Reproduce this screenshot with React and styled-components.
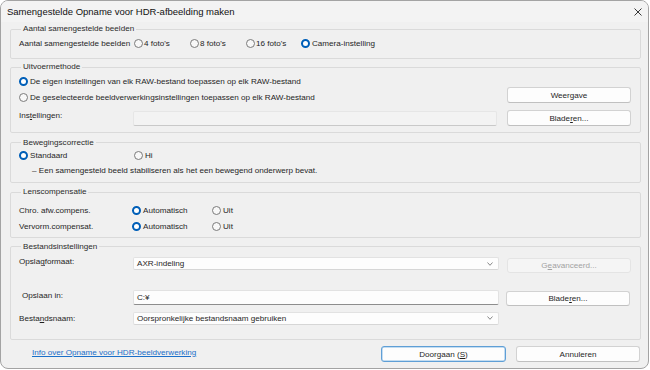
import React from 'react';
import styled, { createGlobalStyle } from 'styled-components';

const GlobalStyle = createGlobalStyle`
  html, body {
    margin: 0;
    padding: 0;
    background: #ffffff;
  }
  body {
    font-family: "Liberation Sans", Arial, sans-serif;
    font-size: 8.1px;
    color: #1f1f1f;
  }
  * { box-sizing: border-box; }
`;

// window frame
const Window = styled.div`
  width: 649px;
  height: 369px;
  border: 1px solid #a3a3a3;
  border-radius: 8px;
  background: #f0f0f0;
  display: flex;
  flex-direction: column;
  overflow: hidden;
`;

const TitleBar = styled.div`
  height: 21px;
  flex: none;
  display: flex;
  align-items: center;
  justify-content: space-between;
  padding: 0 5px 0 6px;
  background: #f3f3f3;
  font-size: 9.5px;
  color: #111;
`;

const CloseIcon = styled.svg`
  width: 10px;
  height: 10px;
  display: block;
`;

const Body = styled.div`
  flex: 1;
  display: flex;
  flex-direction: column;
  padding: 0 7px 0 9px;
`;

// group boxes
const Group = styled.fieldset`
  margin: ${p => p.$top}px 0 0 0;
  padding: ${p => p.$pad};
  border: 1px solid #dadada;
  border-radius: 2px;
  min-width: 0;
`;

const Legend = styled.legend`
  padding: 0 2px;
  margin-left: 2px;
  line-height: 12px;
  height: 12px;
  color: #2b2b2b;
`;

const Row = styled.div`
  display: flex;
  align-items: center;
  height: ${p => p.$h || 14}px;
`;

const Label = styled.span`
  flex: none;
  width: ${p => (p.$w ? `${p.$w}px` : 'auto')};
  white-space: nowrap;
`;

const RadioItem = styled.label`
  display: flex;
  align-items: center;
  gap: ${p => p.$gap ?? 2}px;
  width: ${p => (p.$w ? `${p.$w}px` : 'auto')};
  flex: none;
  white-space: nowrap;
`;

const Dot = styled.span`
  width: 9px;
  height: 9px;
  flex: none;
  border-radius: 50%;
  border: ${p => (p.$on ? '2.8px solid #005fb8' : '1px solid #7b7b7b')};
  background: ${p => (p.$on ? '#ffffff' : '#f8f8f8')};
`;

const MethodGrid = styled.div`
  display: grid;
  grid-template-columns: 104px 364px 124px;
  grid-template-rows: 14px 18px 20px;
  column-gap: 10px;
`;

const FileGrid = styled.div`
  display: grid;
  grid-template-columns: 106px 366px 124px;
  grid-template-rows: 33px 21.5px 13px;
  column-gap: 8px;
`;

const Cell = styled.div`
  grid-column: ${p => p.$col || 'auto'};
  align-self: ${p => p.$align || 'center'};
  margin-top: ${p => p.$mt || 0}px;
  margin-left: ${p => p.$ml || 0}px;
  display: flex;
  align-items: center;
  white-space: nowrap;
`;

const Button = styled.div`
  height: ${p => p.$h || 16}px;
  width: ${p => p.$w || 124}px;
  display: flex;
  align-items: center;
  justify-content: center;
  border: 1px solid ${p => (p.$primary ? '#5f9fd6' : p.$disabled ? '#e4e4e4' : '#d2d2d2')};
  border-bottom-color: ${p => (p.$primary ? '#5f9fd6' : p.$disabled ? '#e4e4e4' : '#c0c0c0')};
  border-radius: 3px;
  background: ${p => (p.$disabled ? '#f5f5f5' : '#fdfdfd')};
  color: ${p => (p.$disabled ? '#a2a2a2' : '#1f1f1f')};
  white-space: nowrap;
  box-shadow: ${p => (p.$primary ? 'inset 0 0 0 0.5px #8cbde6' : 'none')};
`;

const TextField = styled.div`
  height: ${p => p.$h}px;
  width: 100%;
  display: flex;
  align-items: center;
  justify-content: space-between;
  padding: 0 5px 0 3px;
  background: ${p => (p.$disabled ? '#f3f3f3' : '#fdfdfd')};
  border: 1px solid ${p => (p.$disabled ? '#e6e6e6' : '#e2e2e2')};
  border-bottom-color: ${p => (p.$underline ? '#8d8d8d' : p.$disabled ? '#c9c9c9' : '#d6d6d6')};
  border-radius: 2px;
  white-space: nowrap;
`;

const Chevron = styled.svg`
  width: 6px;
  height: 4px;
  display: block;
`;

const Note = styled.div`
  height: 14px;
  display: flex;
  align-items: center;
  padding-left: 13px;
  margin-top: 1px;
`;

const LensGrid = styled.div`
  display: grid;
  grid-template-columns: 113px 80px auto;
  grid-auto-rows: 15.5px;
  align-items: center;
`;

const Footer = styled.div`
  flex: 1;
  display: flex;
  align-items: center;
  padding: 0 1px 0 22px;
  gap: 10px;
`;

const HelpLink = styled.a`
  color: #1a6fc9;
  text-decoration: underline;
  margin-right: auto;
  margin-bottom: 4px;
  cursor: pointer;
`;

const Radio = ({ on, children, w, gap }) => (
  <RadioItem $w={w} $gap={gap}>
    <Dot $on={on} />
    <span>{children}</span>
  </RadioItem>
);

const Select = ({ h, children }) => (
  <TextField $h={h}>
    <span>{children}</span>
    <Chevron viewBox="0 0 6 4">
      <polyline points="0.5,0.5 3,3.3 5.5,0.5" fill="none" stroke="#6a6a6a" strokeWidth="0.8" />
    </Chevron>
  </TextField>
);

export default function App() {
  return (
    <>
      <GlobalStyle />
      <Window>
        <TitleBar>
          <span>Samengestelde Opname voor HDR-afbeelding maken</span>
          <CloseIcon viewBox="0 0 10 10">
            <path d="M1.5 1.5 L8.5 8.5 M8.5 1.5 L1.5 8.5" stroke="#222" strokeWidth="0.9" fill="none" />
          </CloseIcon>
        </TitleBar>
        <Body>
          <Group $top={1} $pad="1px 8px 8px 8px">
            <Legend>Aantal samengestelde beelden</Legend>
            <Row>
              <Label $w={115}>Aantal samengestelde beelden</Label>
              <Radio w={56} gap={1}>4 foto's</Radio>
              <Radio w={56} gap={1}>8 foto's</Radio>
              <Radio w={55} gap={1}>16 foto's</Radio>
              <Radio on gap={2}>Camera-instelling</Radio>
            </Row>
          </Group>

          <Group $top={2} $pad="1px 8px 6px 8px">
            <Legend>Uitvoermethode</Legend>
            <MethodGrid>
              <Cell $col="1 / 3">
                <Radio on>De eigen instellingen van elk RAW-bestand toepassen op elk RAW-bestand</Radio>
              </Cell>
              <Cell />
              <Cell $col="1 / 3" $mt={1}>
                <Radio>De geselecteerde beeldverwerkingsinstellingen toepassen op elk RAW-bestand</Radio>
              </Cell>
              <Cell $align="start" $mt={-1}>
                <Button>Weergave</Button>
              </Cell>
              <Cell $mt={-1}>
                Ins<u>t</u>ellingen:
              </Cell>
              <Cell $align="end">
                <TextField $h={15} $disabled />
              </Cell>
              <Cell $align="end">
                <Button>Blade<u>r</u>en...</Button>
              </Cell>
            </MethodGrid>
          </Group>

          <Group $top={3.5} $pad="0 8px 4.5px 8px">
            <Legend>Bewegingscorrectie</Legend>
            <Row>
              <Radio on w={115}>Standaard</Radio>
              <Radio>Hi</Radio>
            </Row>
            <Note>– Een samengesteld beeld stabiliseren als het een bewegend onderwerp bevat.</Note>
          </Group>

          <Group $top={3} $pad="5px 8px 3px 8px">
            <Legend>Lenscompensatie</Legend>
            <LensGrid>
              <Label>Chro. afw.compens.</Label>
              <Radio on>Automatisch</Radio>
              <Radio>Uit</Radio>
              <Label>Vervorm.compensat.</Label>
              <Radio on>Automatisch</Radio>
              <Radio>Uit</Radio>
            </LensGrid>
          </Group>

          <Group $top={2.5} $pad="4.5px 8px 14.5px 8px">
            <Legend>Bestandsinstellingen</Legend>
            <FileGrid>
              <Cell $align="start">
                Opsla<u>g</u>formaat:
              </Cell>
              <Cell $align="start">
                <Select h={13}>AXR-indeling</Select>
              </Cell>
              <Cell $align="start" $mt={1}>
                <Button $h={15} $disabled>G<u>e</u>avanceerd...</Button>
              </Cell>

              <Cell $align="start" $ml={3} $mt={1}>
                Opslaan in:
              </Cell>
              <Cell $align="start">
                <TextField $h={15} $underline>C:¥</TextField>
              </Cell>
              <Cell $align="start" $ml={-1} $mt={0.5}>
                <Button $h={15}>Blade<u>r</u>en...</Button>
              </Cell>

              <Cell>
                Besta<u>n</u>dsnaam:
              </Cell>
              <Cell $align="start">
                <Select h={13}>Oorspronkelijke bestandsnaam gebruiken</Select>
              </Cell>
              <Cell />
            </FileGrid>
          </Group>

          <Footer>
            <HelpLink>Info over Opname voor HDR-beeldverwerking</HelpLink>
            <Button $w={125} $primary>Doorgaan (<u>S</u>)</Button>
            <Button>Annuleren</Button>
          </Footer>
        </Body>
      </Window>
    </>
  );
}
